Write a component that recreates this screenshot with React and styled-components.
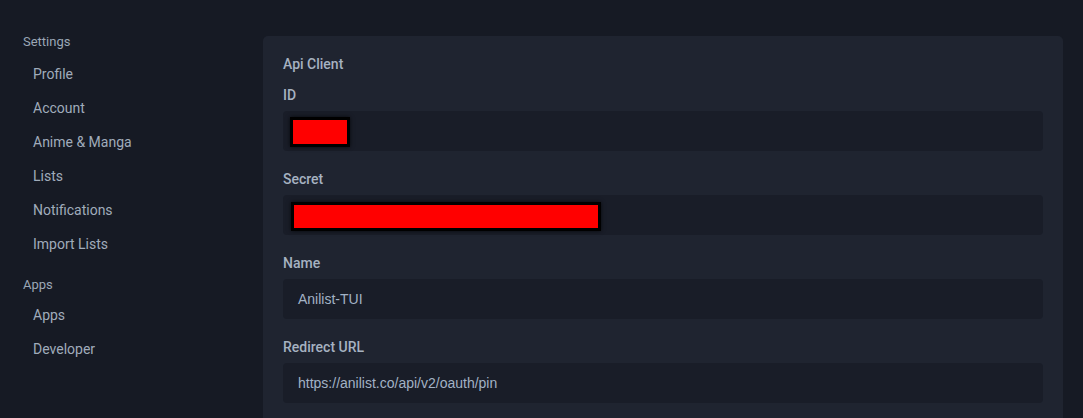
import React from "react";
import styled, { createGlobalStyle } from "styled-components";

const Global = createGlobalStyle`
  html, body { margin: 0; padding: 0; background: #161a24; }
  body { font-family: Roboto, "Liberation Sans", sans-serif; overflow: hidden; }
  * { box-sizing: border-box; }
`;

const Page = styled.div`
  display: flex;
  align-items: flex-start;
  padding: 34px 20px 0 23px;
  min-height: 418px;
`;

const Sidebar = styled.nav`
  width: 240px;
  flex-shrink: 0;
  display: flex;
  flex-direction: column;
`;

const GroupTitle = styled.div`
  font-size: 13px;
  line-height: 16px;
  color: #9ba7b6;
  margin-top: ${(p) => (p.$first ? "0" : "16px")};
  margin-bottom: ${(p) => (p.$first ? "7px" : "5px")};
`;

const NavItem = styled.a`
  display: block;
  font-size: 14px;
  line-height: ${(p) => p.$h || 34}px;
  height: ${(p) => p.$h || 34}px;
  padding-left: 10px;
  color: #a0acbb;
  text-decoration: none;
`;

const Card = styled.section`
  flex: 1;
  margin-top: 2px;
  background: #1f2430;
  border-radius: 5px;
  padding: 20px 20px 20px;
`;

const Heading = styled.div`
  font-size: 14px;
  font-weight: 500;
  line-height: 16px;
  color: #a6b2c1;
  margin-bottom: 15px;
`;

const Field = styled.div`
  margin-bottom: 20px;
`;

const Label = styled.div`
  font-size: 14px;
  font-weight: 500;
  line-height: 16px;
  color: #a6b2c1;
  margin-bottom: 8px;
`;

const Input = styled.div`
  height: 40px;
  background: #191d28;
  border-radius: 4px;
  display: flex;
  align-items: center;
  padding-left: ${(p) => (p.$redacted ? p.$pad : 15)}px;
  font-family: "Liberation Sans", Arial, sans-serif;
  font-size: 14px;
  color: #a2b2c5;
`;

const Redaction = styled.span`
  display: block;
  width: ${(p) => p.$w}px;
  height: ${(p) => p.$h}px;
  margin-top: ${(p) => p.$dy}px;
  background: #ff0000;
  border: 3px solid #000;
  box-shadow: 0 0 4px rgba(0, 0, 0, 0.7);
`;

export default function App() {
  return (
    <>
      <Global />
      <Page>
        <Sidebar>
          <GroupTitle $first>Settings</GroupTitle>
          <NavItem>Profile</NavItem>
          <NavItem>Account</NavItem>
          <NavItem>Anime &amp; Manga</NavItem>
          <NavItem>Lists</NavItem>
          <NavItem>Notifications</NavItem>
          <NavItem>Import Lists</NavItem>
          <GroupTitle>Apps</GroupTitle>
          <NavItem>Apps</NavItem>
          <NavItem $h={35}>Developer</NavItem>
        </Sidebar>
        <Card>
          <Heading>Api Client</Heading>
          <Field>
            <Label>ID</Label>
            <Input $redacted $pad={7}>
              <Redaction $w={60} $h={30} $dy={2} />
            </Input>
          </Field>
          <Field>
            <Label>Secret</Label>
            <Input $redacted $pad={8}>
              <Redaction $w={310} $h={29} $dy={3} />
            </Input>
          </Field>
          <Field>
            <Label>Name</Label>
            <Input>Anilist-TUI</Input>
          </Field>
          <Field>
            <Label>Redirect URL</Label>
            <Input>https://anilist.co/api/v2/oauth/pin</Input>
          </Field>
        </Card>
      </Page>
    </>
  );
}
